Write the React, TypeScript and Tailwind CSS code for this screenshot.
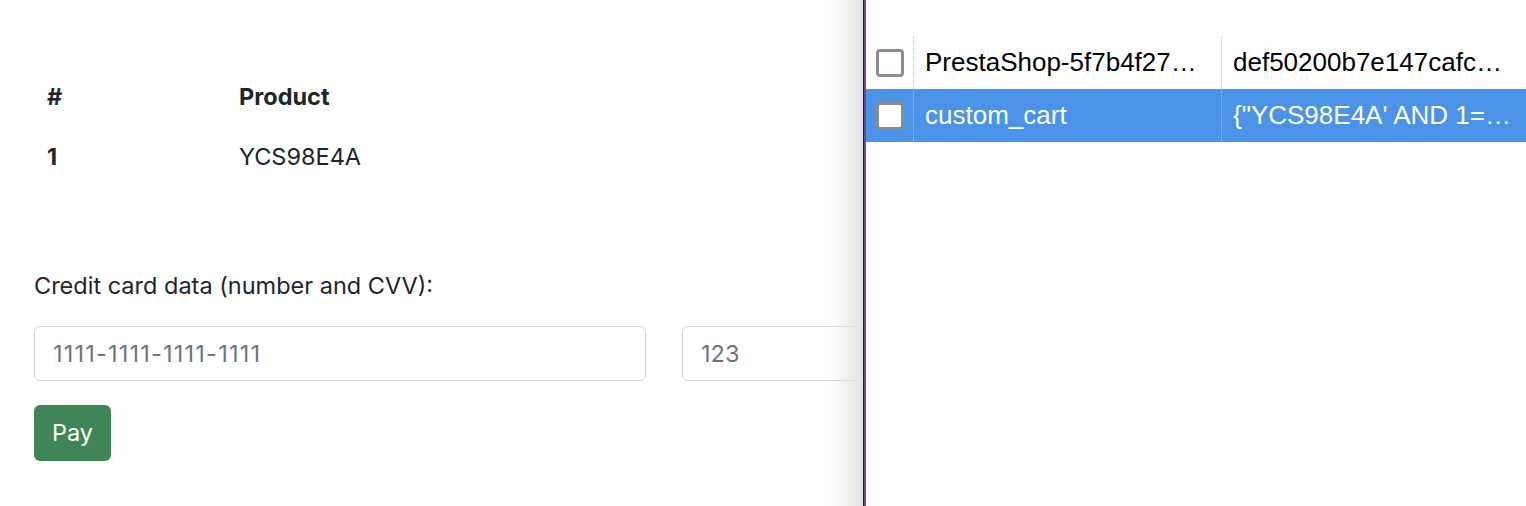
import React from "react";

const leftFont = { fontFamily: "Inter, 'Noto Sans', sans-serif" };

function Checkbox() {
  return (
    <div className="w-[28px] h-[28px] rounded-[4px] border-[3px] border-[#8b8b95] bg-white" />
  );
}

function Row({ name, value, selected }: { name: string; value: string; selected?: boolean }) {
  return (
    <div
      className={
        "flex h-[53px] items-center text-[26px] " +
        (selected ? "bg-[#4a93e8] text-white" : "bg-white text-black")
      }
    >
      <div className="w-[47px] h-full flex items-center pl-[10px]">
        <Checkbox />
      </div>
      <div className="w-[308px] h-full flex items-center pl-[11px] border-l border-dotted border-[#bdbdbd] overflow-hidden whitespace-nowrap">
        {name}
      </div>
      <div className="flex-1 h-full flex items-center pl-[11px] border-l border-dotted border-[#bdbdbd] overflow-hidden whitespace-nowrap">
        {value}
      </div>
    </div>
  );
}

export default function App() {
  return (
    <div className="flex w-[1526px] h-[506px] bg-white overflow-hidden">
      <div className="relative w-[863px] h-full overflow-hidden text-[#212529]" style={leftFont}>
        <div className="pl-[34px] pt-[82px]">
          <div className="flex h-[30px] items-center text-[23.5px] font-bold">
            <div className="w-[205px] pl-[13px]">#</div>
            <div>Product</div>
          </div>
          <div className="flex h-[30px] mt-[30px] items-center text-[23.5px]">
            <div className="w-[205px] pl-[13px] font-bold">1</div>
            <div>YCS98E4A</div>
          </div>
          <div className="mt-[99px] h-[30px] flex items-center text-[23.5px]">
            Credit card data (number and CVV):
          </div>
          <div className="flex gap-[36px] mt-[25px]">
            <div className="w-[612px] h-[55px] shrink-0 rounded-[6px] border border-[#ced4da] flex items-center pl-[18px] text-[23.5px] text-[#6c757d] tracking-[1.2px]">
              1111-1111-1111-1111
            </div>
            <div className="w-[612px] h-[55px] shrink-0 rounded-[6px] border border-[#ced4da] flex items-center pl-[18px] text-[23.5px] text-[#6c757d]">
              123
            </div>
          </div>
          <div className="mt-[24px] w-[77px] h-[56px] rounded-[6px] bg-[#3f8657] text-white text-[23.5px] flex items-center justify-center">
            Pay
          </div>
        </div>
        <div className="absolute right-0 top-0 h-full w-[34px] bg-gradient-to-r from-transparent to-[#e4e4e4]" />
      </div>
      <div className="w-[3px] h-full border-l border-[#222] bg-[#6b4a8e]" />
      <div className="flex-1 h-full pt-[36px]" style={{ fontFamily: "'Liberation Sans', Arial, sans-serif" }}>
        <Row name="PrestaShop-5f7b4f27…" value="def50200b7e147cafc…" />
        <Row name="custom_cart" value={"{\"YCS98E4A' AND 1=…"} selected />
      </div>
    </div>
  );
}
